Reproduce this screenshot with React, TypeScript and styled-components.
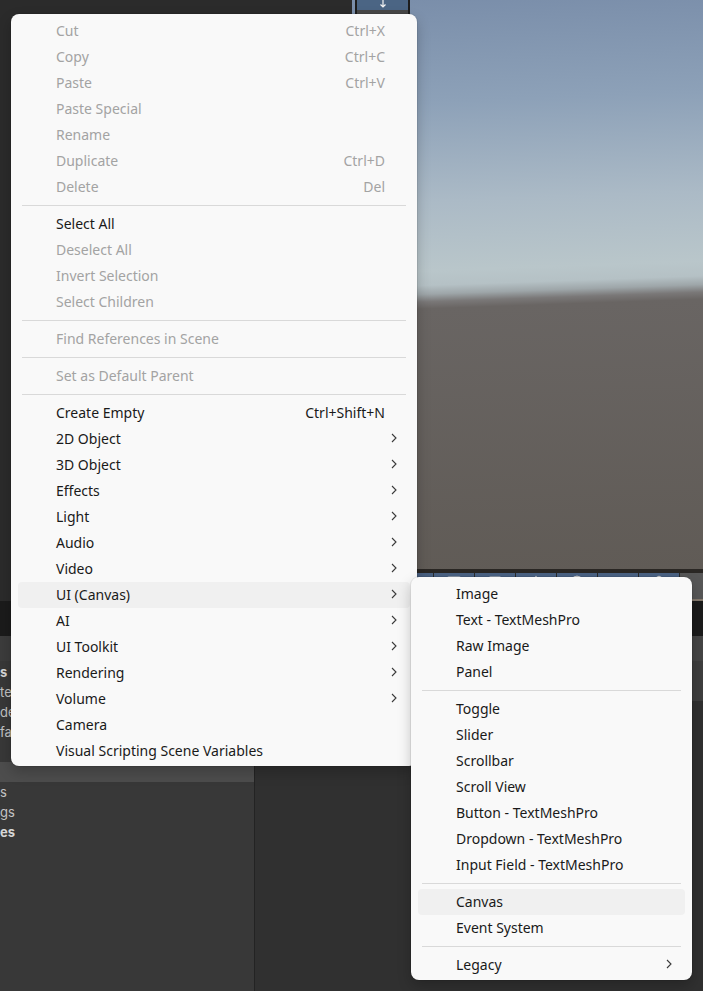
import styled, { createGlobalStyle } from "styled-components";
import { Shapes, Monitor, Image, Sun, Globe, Volume2, Box, Move } from "lucide-react";

type Entry =
  | "sep"
  | {
      label: string;
      shortcut?: string;
      disabled?: boolean;
      sub?: boolean;
      active?: boolean;
    };

const hierarchyMenu: Entry[] = [
  { label: "Cut", shortcut: "Ctrl+X", disabled: true },
  { label: "Copy", shortcut: "Ctrl+C", disabled: true },
  { label: "Paste", shortcut: "Ctrl+V", disabled: true },
  { label: "Paste Special", disabled: true },
  { label: "Rename", disabled: true },
  { label: "Duplicate", shortcut: "Ctrl+D", disabled: true },
  { label: "Delete", shortcut: "Del", disabled: true },
  "sep",
  { label: "Select All" },
  { label: "Deselect All", disabled: true },
  { label: "Invert Selection", disabled: true },
  { label: "Select Children", disabled: true },
  "sep",
  { label: "Find References in Scene", disabled: true },
  "sep",
  { label: "Set as Default Parent", disabled: true },
  "sep",
  { label: "Create Empty", shortcut: "Ctrl+Shift+N" },
  { label: "2D Object", sub: true },
  { label: "3D Object", sub: true },
  { label: "Effects", sub: true },
  { label: "Light", sub: true },
  { label: "Audio", sub: true },
  { label: "Video", sub: true },
  { label: "UI (Canvas)", sub: true, active: true },
  { label: "AI", sub: true },
  { label: "UI Toolkit", sub: true },
  { label: "Rendering", sub: true },
  { label: "Volume", sub: true },
  { label: "Camera" },
  { label: "Visual Scripting Scene Variables" },
];

const canvasMenu: Entry[] = [
  { label: "Image" },
  { label: "Text - TextMeshPro" },
  { label: "Raw Image" },
  { label: "Panel" },
  "sep",
  { label: "Toggle" },
  { label: "Slider" },
  { label: "Scrollbar" },
  { label: "Scroll View" },
  { label: "Button - TextMeshPro" },
  { label: "Dropdown - TextMeshPro" },
  { label: "Input Field - TextMeshPro" },
  "sep",
  { label: "Canvas", active: true },
  { label: "Event System" },
  "sep",
  { label: "Legacy", sub: true },
];

const hierarchyRows = [
  { text: "s", bold: true },
  { text: "te" },
  { text: "de" },
  { text: "fa" },
  { text: "" },
  { text: "", selected: true },
  { text: "s" },
  { text: "gs" },
  { text: "es", bold: true },
];

const sceneTools = [Move, Shapes, Monitor, Image, Sun, Globe, Volume2, Box];

const GlobalStyle = createGlobalStyle`
  html, body {
    margin: 0;
    padding: 0;
    background: #2b2b2b;
    overflow: hidden;
  }
  #root {
    width: 703px;
    height: 991px;
  }
`;

const Editor = styled.div`
  position: relative;
  width: 703px;
  height: 991px;
  display: grid;
  grid-template-rows: 601px 35px 1fr;
  overflow: hidden;
  font-family: Inter, "Liberation Sans", sans-serif;
`;

const TopRow = styled.div`
  display: flex;
  min-height: 0;
`;

const LeftDock = styled.div`
  width: 352px;
  flex: none;
  background: #2b2b2b;
`;

const SceneView = styled.div`
  flex: 1;
  min-width: 0;
  display: flex;
  flex-direction: column;
`;

const Viewport = styled.div`
  flex: 1;
  padding-left: 3px;
  overflow: hidden;
  background: linear-gradient(
    178deg,
    #7a8eaa 0%,
    #8da1b8 18%,
    #abbac6 35%,
    #b9c6ca 47%,
    #b5c1c5 49.5%,
    #9ea6a9 51%,
    #7a7878 52.3%,
    #696563 53.5%,
    #605b56 100%
  );
`;

const GizmoStrip = styled.div`
  width: 51px;
  height: 160px;
  border: 2px solid #1d1d1d;
  border-top: none;
  background: #474747;
`;

const GizmoButton = styled.div`
  height: 10px;
  background: #4b6584;
  display: flex;
  justify-content: center;
  align-items: flex-end;
`;

const SceneToolbar = styled.div`
  height: 26px;
  border-top: 4px solid #2a2724;
  border-bottom: 2px solid #857a6e;
  background: #575757;
  display: flex;
  justify-content: flex-end;
`;

const ToolButton = styled.div`
  width: 40px;
  border-right: 1px solid #2b2b2b;
  background: #4b6283;
  color: #d4d4d4;
  display: flex;
  justify-content: center;
  padding-top: 2px;
`;

const ToolbarTail = styled.div`
  width: 41px;
`;

const TabStrip = styled.div`
  background: #1b1b1b;
`;

const BottomRow = styled.div`
  display: grid;
  grid-template-columns: 255px 1fr;
  min-height: 0;
`;

const HierarchyPanel = styled.div`
  border-right: 1px solid #232323;
  background: #383838;
  display: flex;
  flex-direction: column;
`;

const PanelHeader = styled.div`
  height: 25px;
  flex: none;
  background: #3c3c3c;
`;

const TreeList = styled.div`
  padding-top: 1px;
`;

const TreeRow = styled.div<{ $bold?: boolean; $selected?: boolean }>`
  height: 20px;
  line-height: 20px;
  font-size: 13px;
  white-space: nowrap;
  font-weight: ${(p) => (p.$bold ? 700 : 400)};
  color: ${(p) => (p.$bold ? "#d6d6d6" : "#c4c4c4")};
  background: ${(p) => (p.$selected ? "#4d4d4d" : "transparent")};
`;

const InspectorPanel = styled.div`
  display: flex;
  flex-direction: column;
  background: #303030;
`;

const InspectorHeader = styled.div`
  height: 25px;
  flex: none;
  background: #454545;
  border-right: 1px solid #2a2a2a;
  margin-right: 3px;
`;

const InspectorTitle = styled.div`
  height: 40px;
  flex: none;
  background: #3e3e3e;
`;

const MenuPanel = styled.div`
  position: absolute;
  background: #f9f9f9;
  border-radius: 8px;
  padding: 4px 0 2px;
  box-shadow: 0 0 0 1px rgba(0, 0, 0, 0.07), 0 6px 14px rgba(0, 0, 0, 0.22);
  font-family: "Segoe UI", "Noto Sans", "Open Sans", sans-serif;
  font-size: 14px;
  z-index: 1;
`;

const ContextMenu = styled(MenuPanel)`
  left: 11px;
  top: 14px;
  width: 406px;
`;

const CanvasSubmenu = styled(MenuPanel)`
  left: 411px;
  top: 577px;
  width: 281px;
  z-index: 2;
`;

const MenuRow = styled.div<{ $disabled?: boolean; $active?: boolean }>`
  box-sizing: border-box;
  display: flex;
  align-items: center;
  height: 26px;
  margin: 0 7px;
  padding: 0 13px 2px 38px;
  border-radius: 4px;
  white-space: nowrap;
  background: ${(p) => (p.$active ? "#f0f0f0" : "transparent")};
  color: ${(p) => (p.$disabled ? "#a3a3a3" : "#1a1a1a")};
`;

const MenuLabel = styled.span`
  flex: 1;
`;

const MenuShortcut = styled.span`
  margin-right: 12px;
`;

const MenuSeparator = styled.div`
  height: 1px;
  margin: 5px 11px;
  background: #d9d9d9;
`;

function Chevron() {
  return (
    <svg width="6" height="10" viewBox="0 0 6 10">
      <path d="M1 1l4 4-4 4" fill="none" stroke="#3a3a3a" strokeWidth="1.1" />
    </svg>
  );
}

function MenuItems({ items }: { items: Entry[] }) {
  return (
    <>
      {items.map((item, i) =>
        item === "sep" ? (
          <MenuSeparator key={i} />
        ) : (
          <MenuRow key={i} $disabled={item.disabled} $active={item.active}>
            <MenuLabel>{item.label}</MenuLabel>
            {item.shortcut && <MenuShortcut>{item.shortcut}</MenuShortcut>}
            {item.sub && <Chevron />}
          </MenuRow>
        )
      )}
    </>
  );
}

export default function App() {
  return (
    <>
      <GlobalStyle />
      <Editor>
        <TopRow>
          <LeftDock />
          <SceneView>
            <Viewport>
              <GizmoStrip>
                <GizmoButton>
                  <svg width="8" height="10" viewBox="0 0 8 10">
                    <path
                      d="M4 0v7M1.5 4.5L4 7l2.5-2.5"
                      fill="none"
                      stroke="#f2f2f2"
                      strokeWidth="1.2"
                    />
                  </svg>
                </GizmoButton>
              </GizmoStrip>
            </Viewport>
            <SceneToolbar>
              {sceneTools.map((Icon, i) => (
                <ToolButton key={i}>
                  <Icon size={16} strokeWidth={1.6} />
                </ToolButton>
              ))}
              <ToolbarTail />
            </SceneToolbar>
          </SceneView>
        </TopRow>
        <TabStrip />
        <BottomRow>
          <HierarchyPanel>
            <PanelHeader />
            <TreeList>
              {hierarchyRows.map((row, i) => (
                <TreeRow key={i} $bold={row.bold} $selected={row.selected}>
                  {row.text}
                </TreeRow>
              ))}
            </TreeList>
          </HierarchyPanel>
          <InspectorPanel>
            <InspectorHeader />
            <InspectorTitle />
          </InspectorPanel>
        </BottomRow>

        <ContextMenu>
          <MenuItems items={hierarchyMenu} />
        </ContextMenu>
        <CanvasSubmenu>
          <MenuItems items={canvasMenu} />
        </CanvasSubmenu>
      </Editor>
    </>
  );
}
